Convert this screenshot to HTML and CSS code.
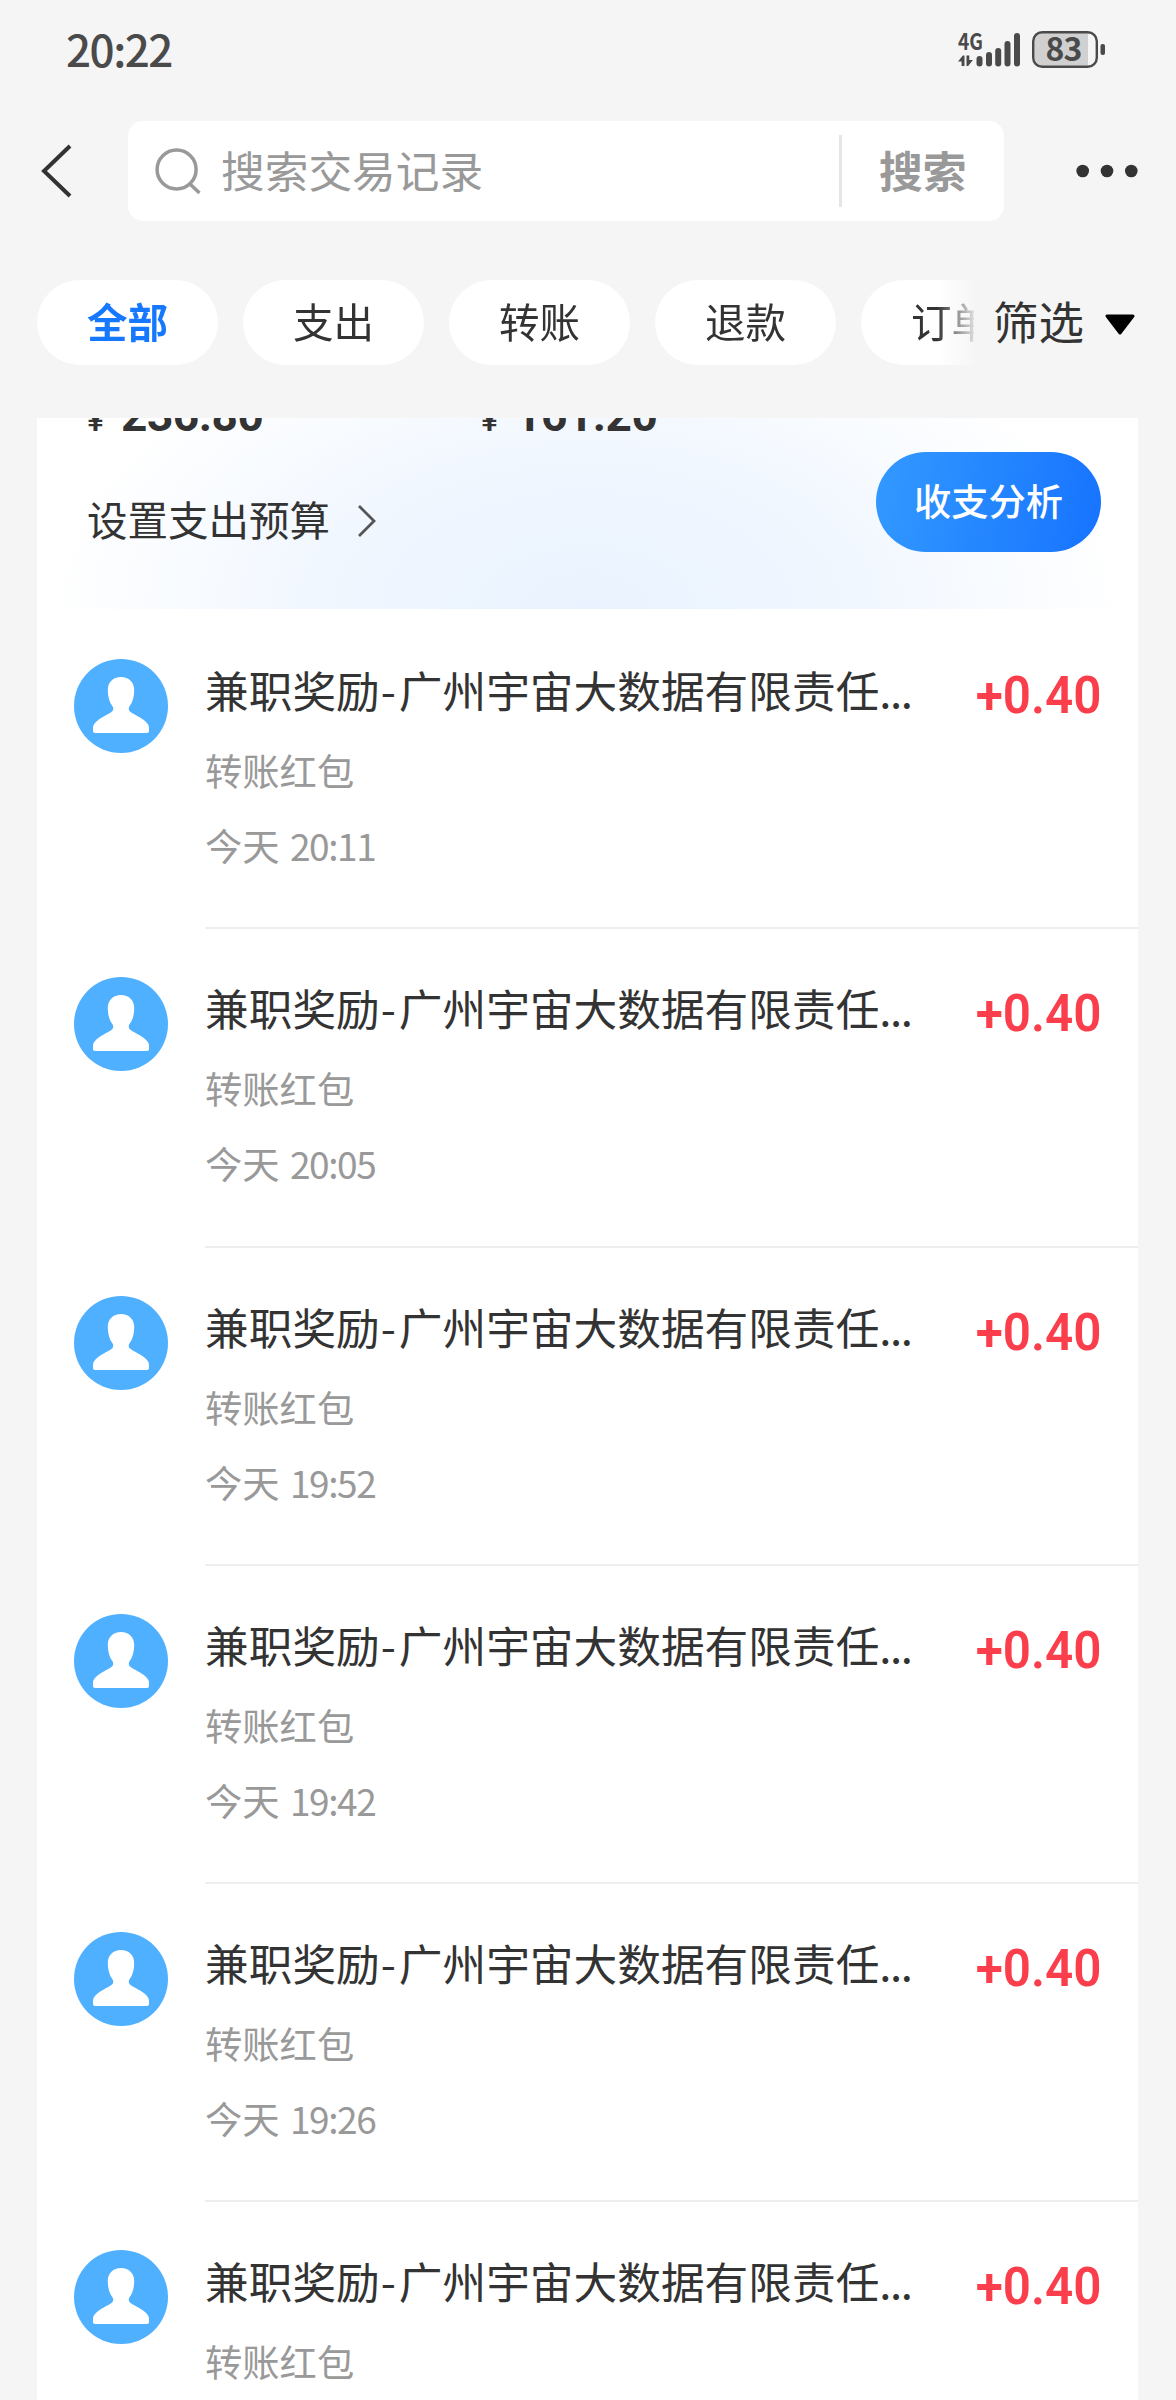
FILE: index.html
```html
<!DOCTYPE html>
<html lang="zh-CN">
<head>
<meta charset="utf-8">
<title>账单</title>
<link rel="stylesheet" href="styles.css">
</head>
<body>
<svg class="defs" width="0" height="0">
  <symbol id="avatar" viewBox="0 0 94 94">
    <circle cx="47" cy="47" r="47" fill="#4fb0ff"/>
    <path fill="#fff" d="M47 18c8 0 13.200 5.400 13.200 13 0 7-1.700 12.500-4.700 16.300-1 1.800-1 3.700.2 4.900 2.600 2.300 10 5.600 13.800 8.600 3.500 2.700 5.500 5 5.500 8v3c0 1.500-.7 2.200-2.200 2.200H21.200c-1.500 0-2.200-.7-2.200-2.200v-3c0-3 2-5.300 5.500-8 3.800-3 11.200-6.300 13.800-8.600 1.200-1.200 1.200-3.100.2-4.900-3-3.800-4.700-9.300-4.700-16.300 0-7.600 5.200-13 13.200-13z"/>
  </symbol>
</svg>
<div class="screen">
  <header class="status">
    <span class="clock">20:22</span>
    <svg class="indicators" width="150" height="44" viewBox="0 0 150 44">
      <text class="net" x="0" y="19.500" textLength="25" lengthAdjust="spacingAndGlyphs">4G</text>
      <g fill="#4a4a4a">
        <path d="M0 31.500L4.800 25.500h1.700V36H3.600v-4.500zM8.500 25.500h2.800V30h3.600L10.200 36H8.500z"/>
        <rect x="18.500" y="26" width="6" height="10.500" rx="3"/>
        <rect x="28" y="22" width="6" height="14.500" rx="3"/>
        <rect x="37.200" y="18" width="6" height="18.500" rx="3"/>
        <rect x="46.500" y="11" width="6" height="25.500" rx="3"/>
        <rect x="56" y="3" width="6" height="33.500" rx="3"/>
        <rect x="142.500" y="14" width="4.500" height="11" rx="2"/>
      </g>
      <rect x="75.200" y="2.200" width="63.600" height="34.600" rx="9" fill="#f5f5f5"/>
      <path fill="#d0d0d0" d="M84 3h46v33H84a8 8 0 0 1-8-8V11a8 8 0 0 1 8-8z"/>
      <rect x="75.200" y="2.200" width="63.600" height="34.600" rx="9" fill="none" stroke="#4a4a4a" stroke-width="2.400"/>
      <text class="level" x="105.500" y="31" text-anchor="middle">83</text>
    </svg>
  </header>

  <nav class="searchbar">
    <svg class="back" width="32" height="54" viewBox="0 0 32 54"><path d="M30 2L4 27l26 25" fill="none" stroke="#333" stroke-width="4"/></svg>
    <div class="search">
      <svg width="48" height="52" viewBox="0 0 48 52" fill="none" stroke="#999" stroke-width="3.500"><circle cx="22.600" cy="24.500" r="19.500"/><path d="M36.500 39.500l9 8.500"/></svg>
      <span class="placeholder">搜索交易记录</span>
      <span class="submit">搜索</span>
    </div>
    <svg class="more" width="62" height="14" viewBox="0 0 62 14" fill="#333"><circle cx="6.700" cy="7" r="6.300"/><circle cx="31" cy="7" r="6.300"/><circle cx="55.300" cy="7" r="6.300"/></svg>
  </nav>

  <div class="filters">
    <div class="chips">
      <span class="chip active">全部</span>
      <span class="chip">支出</span>
      <span class="chip">转账</span>
      <span class="chip">退款</span>
      <span class="chip">订单</span>
    </div>
    <span class="filter">筛选</span>
    <svg class="caret" width="32" height="22" viewBox="0 0 32 22"><path d="M3 2h26L16 19z" stroke="#000" stroke-width="3" stroke-linejoin="round"/></svg>
  </div>

  <main class="card">
    <section class="summary">
      <div class="totals">
        <div class="total"><span class="yen">¥</span>236.80</div>
        <div class="total"><span class="yen">¥</span>161.20</div>
      </div>
      <div class="actions">
        <span class="budget">设置支出预算</span>
        <svg width="20" height="34" viewBox="0 0 20 34"><path d="M2 2l15 15L2 32" fill="none" stroke="#555" stroke-width="2.800"/></svg>
        <span class="analyse">收支分析</span>
      </div>
    </section>
    <ul class="list">
      <li class="item"><svg class="avatar"><use href="#avatar"/></svg><div class="info"><p class="title">兼职奖励<i>-</i>广州宇宙大数据有限责任<b>...</b></p><p class="kind">转账红包</p><p class="time">今天 <span>20:11</span></p></div><span class="amount">+0.40</span></li>
      <li class="item"><svg class="avatar"><use href="#avatar"/></svg><div class="info"><p class="title">兼职奖励<i>-</i>广州宇宙大数据有限责任<b>...</b></p><p class="kind">转账红包</p><p class="time">今天 <span>20:05</span></p></div><span class="amount">+0.40</span></li>
      <li class="item"><svg class="avatar"><use href="#avatar"/></svg><div class="info"><p class="title">兼职奖励<i>-</i>广州宇宙大数据有限责任<b>...</b></p><p class="kind">转账红包</p><p class="time">今天 <span>19:52</span></p></div><span class="amount">+0.40</span></li>
      <li class="item"><svg class="avatar"><use href="#avatar"/></svg><div class="info"><p class="title">兼职奖励<i>-</i>广州宇宙大数据有限责任<b>...</b></p><p class="kind">转账红包</p><p class="time">今天 <span>19:42</span></p></div><span class="amount">+0.40</span></li>
      <li class="item"><svg class="avatar"><use href="#avatar"/></svg><div class="info"><p class="title">兼职奖励<i>-</i>广州宇宙大数据有限责任<b>...</b></p><p class="kind">转账红包</p><p class="time">今天 <span>19:26</span></p></div><span class="amount">+0.40</span></li>
      <li class="item"><svg class="avatar"><use href="#avatar"/></svg><div class="info"><p class="title">兼职奖励<i>-</i>广州宇宙大数据有限责任<b>...</b></p><p class="kind">转账红包</p></div><span class="amount">+0.40</span></li>
    </ul>
  </main>
</div>
</body>
</html>
```

FILE: styles.css
```css
* { box-sizing: border-box; }
body, p, ul { margin: 0; padding: 0; }
body {
  background: #f5f5f5;
  color: #333;
  font-family: "Noto Sans CJK SC", "Noto Sans", sans-serif;
}
.defs { display: block; }
svg { flex: none; }
.screen {
  width: 1176px;
  height: 2400px;
  overflow: hidden;
  display: flex;
  flex-direction: column;
}

/* status bar */
.status {
  height: 121px;
  padding: 26px 68px 0 66px;
  display: flex;
  justify-content: space-between;
  align-items: flex-start;
  color: #4a4a4a;
}
.clock { font-size: 44px; font-weight: 500; line-height: 44px; letter-spacing: -1.500px; }
.indicators { margin-top: 4px; overflow: visible; }
.net { font: 700 23px "Noto Sans CJK SC", sans-serif; fill: #4a4a4a; }
.level { font: 700 32px "Noto Sans CJK SC", sans-serif; letter-spacing: -1px; fill: #4a4a4a; }

/* search */
.searchbar {
  height: 100px;
  padding: 0 38px 0 40px;
  display: flex;
  align-items: center;
}
.search {
  width: 876px;
  height: 100px;
  margin: 0 72px 0 56px;
  padding-left: 26px;
  border-radius: 15px;
  background: #fff;
  color: #999;
  font-size: 43.700px;
  display: flex;
  align-items: center;
}
.placeholder { flex: 1; margin: 0 0 4px 19px; line-height: 60px; }
.submit {
  width: 165px;
  height: 72px;
  border-left: 3px solid #e5e5e5;
  padding-left: 37px;
  font-weight: 700;
  line-height: 68px;
}

/* filters */
.filters {
  height: 85px;
  margin: 59px 0 53px 37px;
  display: flex;
  align-items: center;
}
.chips {
  width: 937px;
  display: flex;
  gap: 25px;
  overflow: hidden;
  -webkit-mask-image: linear-gradient(90deg, #000 900px, transparent 942px);
  mask-image: linear-gradient(90deg, #000 900px, transparent 942px);
}
.chip {
  flex: none;
  width: 181px;
  height: 85px;
  border-radius: 43px;
  background: #fff;
  font-size: 40.500px;
  line-height: 81px;
  text-align: center;
}
.active { color: #1677ff; font-weight: 700; }
.filter { width: 111px; margin: 0 0 6px 19px; font-size: 45.500px; line-height: 60px; }
.caret { margin-top: 4px; }

/* card */
.card { width: 1101px; height: 1982px; margin-left: 37px; background: #fff; flex: none; }
.summary {
  height: 191px;
  padding-left: 50px;
  overflow: hidden;
  background: radial-gradient(ellipse 540px 310px at 550px 191px, #e9f2fe 0%, #f1f7ff 50%, #fff 100%);
}
.totals {
  height: 14px;
  display: flex;
  align-items: flex-end;
}
.total { width: 394px; font: 700 46px/46px Roboto, sans-serif; letter-spacing: -.5px; margin-bottom: -11px; }
.yen { display: inline-block; width: 34px; font-size: 32px; font-weight: 500; }
.actions { display: flex; align-items: center; height: 100px; margin-top: 20px; }
.budget { font-size: 40.500px; line-height: 60px; margin: 34px 27px 0 0; }
.actions svg { margin-top: 37px; }
.analyse {
  width: 225px;
  height: 100px;
  margin: 0 37px 0 auto;
  border-radius: 50px;
  background: linear-gradient(100deg, #3399ff, #1673ff);
  color: #fff;
  font-size: 37.300px;
  font-weight: 500;
  line-height: 97px;
  text-align: center;
}

/* transactions */
.list { list-style: none; }
.item {
  position: relative;
  height: 318.250px;
  padding: 50px 37px 0;
  display: flex;
  align-items: flex-start;
}
.item::after {
  content: "";
  position: absolute;
  left: 168px;
  right: 0;
  bottom: -2px;
  height: 2px;
  background: #eee;
}
.avatar { width: 94px; height: 94px; }
.info { flex: 1; margin-left: 37px; white-space: nowrap; }
.title { font-size: 43.700px; line-height: 61px; }
.title i { display: inline-block; width: 19px; padding-left: 1px; font-style: normal; }
.title b { font-weight: 400; letter-spacing: -1.500px; }
.kind { margin-top: 25px; color: #999; font-size: 37.300px; line-height: 50px; }
.time { margin-top: 25px; color: #999; font-size: 37.300px; line-height: 50px; }
.time span { margin-left: 2px; font-size: 37px; letter-spacing: -1.400px; }
.amount {
  color: #fa3e4c;
  font: 600 52px/60px Roboto, sans-serif;
  margin-top: 7px;
  transform: scaleX(.95);
  transform-origin: right;
}
```
